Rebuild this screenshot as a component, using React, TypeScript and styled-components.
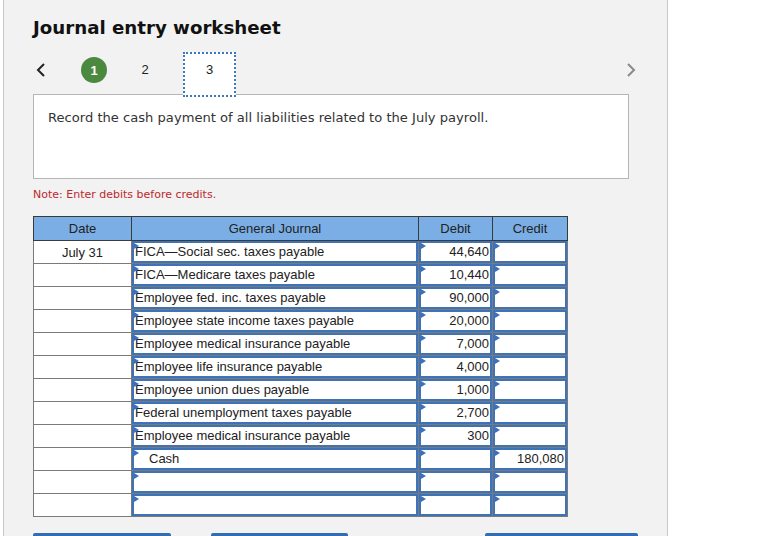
import styled, { createGlobalStyle } from "styled-components";

const GlobalStyle = createGlobalStyle`
  html, body {
    margin: 0;
    padding: 0;
    background: #ffffff;
    overflow: hidden;
  }
  body {
    font-family: "DejaVu Sans", Verdana, sans-serif;
  }
`;

const Page = styled.div`
  display: flex;
  height: 100vh;
`;

const Panel = styled.div`
  margin-left: 3px;
  width: 665px;
  min-height: 100%;
  background: #f2f2f2;
  border-left: 1px solid #c8c8c8;
  border-right: 1px solid #c8c8c8;
  padding: 16px 0 0 29px;
  box-sizing: border-box;
`;

const Title = styled.h1`
  margin: 0;
  font-family: "DejaVu Sans", Verdana, sans-serif;
  font-size: 18.2px;
  line-height: 24px;
  font-weight: bold;
  color: #111;
`;

const NavRow = styled.div`
  display: flex;
  align-items: flex-start;
  width: 606px;
  margin-top: 12px;
  height: 44px;
`;

const Arrow = styled.button<{ $dim?: boolean }>`
  border: none;
  background: none;
  padding: 0;
  width: 16px;
  height: 20px;
  margin-top: 8px;
  display: flex;
  align-items: center;
  justify-content: center;
  color: ${(p) => (p.$dim ? "#8a8a8a" : "#222")};
  cursor: pointer;
`;

const Spacer = styled.div`
  flex: 1;
`;

const StepDone = styled.div`
  width: 26px;
  height: 26px;
  border-radius: 50%;
  background: #4b8a3e;
  color: #fff;
  font-family: "Liberation Sans", Arial, sans-serif;
  font-weight: bold;
  font-size: 13px;
  display: flex;
  align-items: center;
  justify-content: center;
  margin-left: 32px;
  margin-top: 5px;
`;

const Step = styled.div`
  width: 24px;
  margin-left: 26px;
  margin-top: 10px;
  text-align: center;
  font-family: "Liberation Sans", Arial, sans-serif;
  font-size: 13px;
  color: #222;
`;

const StepActive = styled.div`
  width: 53px;
  height: 45px;
  margin-left: 26px;
  background: #fff;
  border: 2px dotted #3a78c0;
  text-align: center;
  padding-top: 8px;
  box-sizing: border-box;
  font-family: "Liberation Sans", Arial, sans-serif;
  font-size: 13px;
  color: #222;
`;

const Prompt = styled.div`
  width: 596px;
  height: 85px;
  margin-top: -2px;
  background: #fff;
  border: 1px solid #b5b5b5;
  box-sizing: border-box;
  padding: 14px 14px;
  font-size: 13.1px;
  line-height: 18px;
  color: #333;
`;

const Note = styled.div`
  margin-top: 9px;
  font-size: 11px;
  line-height: 14px;
  color: #c0282c;
`;

const Table = styled.table`
  margin-top: 14px;
  border-collapse: collapse;
  table-layout: fixed;
  font-family: "Liberation Sans", Arial, sans-serif;
  font-size: 13px;
  color: #222;
`;

const Th = styled.th<{ $w: number }>`
  width: ${(p) => p.$w}px;
  height: 23px;
  background: #7aaee5;
  border: 1px solid #3a3a3a;
  font-weight: normal;
  padding: 0;
  text-align: center;
`;

const DateCell = styled.td`
  height: 22px;
  background: #fff;
  border: 1px solid #7a7a7a;
  text-align: center;
  padding: 0;
`;

const InputCell = styled.td`
  height: 22px;
  border: 1px solid #7a7a7a;
  padding: 0;
  background: #fff;
`;

const Field = styled.div<{ $align?: "left" | "right"; $indent?: boolean }>`
  position: relative;
  height: 22px;
  border: 2px solid #3f73b8;
  box-sizing: border-box;
  background: #fff;
  line-height: 18px;
  white-space: nowrap;
  overflow: hidden;
  text-align: ${(p) => p.$align ?? "left"};
  padding: ${(p) => (p.$indent ? "0 0 0 15px" : p.$align === "right" ? "0 1px 0 0" : "0 0 0 1px")};
`;

const Marker = styled.span`
  position: absolute;
  left: 0;
  top: 0;
  width: 0;
  height: 0;
  border-top: 3px solid transparent;
  border-bottom: 3px solid transparent;
  border-left: 5px solid #3b6fc2;
`;

const ButtonRow = styled.div`
  display: flex;
  margin-top: 16px;
`;

const ActionButton = styled.button<{ $w: number; $gap: number }>`
  width: ${(p) => p.$w}px;
  margin-left: ${(p) => p.$gap}px;
  height: 34px;
  background: #2f6db5;
  border: none;
  border-radius: 2px;
`;

interface Entry {
  date?: string;
  account?: string;
  debit?: string;
  credit?: string;
  indent?: boolean;
}

const entries: Entry[] = [
  { date: "July 31", account: "FICA\u2014Social sec. taxes payable", debit: "44,640" },
  { account: "FICA\u2014Medicare taxes payable", debit: "10,440" },
  { account: "Employee fed. inc. taxes payable", debit: "90,000" },
  { account: "Employee state income taxes payable", debit: "20,000" },
  { account: "Employee medical insurance payable", debit: "7,000" },
  { account: "Employee life insurance payable", debit: "4,000" },
  { account: "Employee union dues payable", debit: "1,000" },
  { account: "Federal unemployment taxes payable", debit: "2,700" },
  { account: "Employee medical insurance payable", debit: "300" },
  { account: "Cash", credit: "180,080", indent: true },
  {},
  {},
];

function Chevron({ dir }: { dir: "left" | "right" }) {
  return (
    <svg width="10" height="16" viewBox="0 0 10 16">
      <polyline
        points={dir === "left" ? "8,2 2,8 8,14" : "2,2 8,8 2,14"}
        fill="none"
        stroke="currentColor"
        strokeWidth="2"
      />
    </svg>
  );
}

function App() {
  return (
    <Page>
      <GlobalStyle />
      <Panel>
        <Title>Journal entry worksheet</Title>
        <NavRow>
          <Arrow aria-label="previous">
            <Chevron dir="left" />
          </Arrow>
          <StepDone>1</StepDone>
          <Step>2</Step>
          <StepActive>3</StepActive>
          <Spacer />
          <Arrow $dim aria-label="next">
            <Chevron dir="right" />
          </Arrow>
        </NavRow>
        <Prompt>Record the cash payment of all liabilities related to the July payroll.</Prompt>
        <Note>Note: Enter debits before credits.</Note>
        <Table>
          <thead>
            <tr>
              <Th $w={97}>Date</Th>
              <Th $w={286}>General Journal</Th>
              <Th $w={73}>Debit</Th>
              <Th $w={74}>Credit</Th>
            </tr>
          </thead>
          <tbody>
            {entries.map((e, i) => (
              <tr key={i}>
                <DateCell>{e.date}</DateCell>
                <InputCell>
                  <Field $indent={e.indent}>
                    <Marker />
                    {e.account}
                  </Field>
                </InputCell>
                <InputCell>
                  <Field $align="right">
                    <Marker />
                    {e.debit}
                  </Field>
                </InputCell>
                <InputCell>
                  <Field $align="right">
                    <Marker />
                    {e.credit}
                  </Field>
                </InputCell>
              </tr>
            ))}
          </tbody>
        </Table>
        <ButtonRow>
          <ActionButton $w={138} $gap={0} aria-label="Record entry" />
          <ActionButton $w={137} $gap={40} aria-label="Clear entry" />
          <ActionButton $w={153} $gap={137} aria-label="View general journal" />
        </ButtonRow>
      </Panel>
    </Page>
  );
}

export default App;
